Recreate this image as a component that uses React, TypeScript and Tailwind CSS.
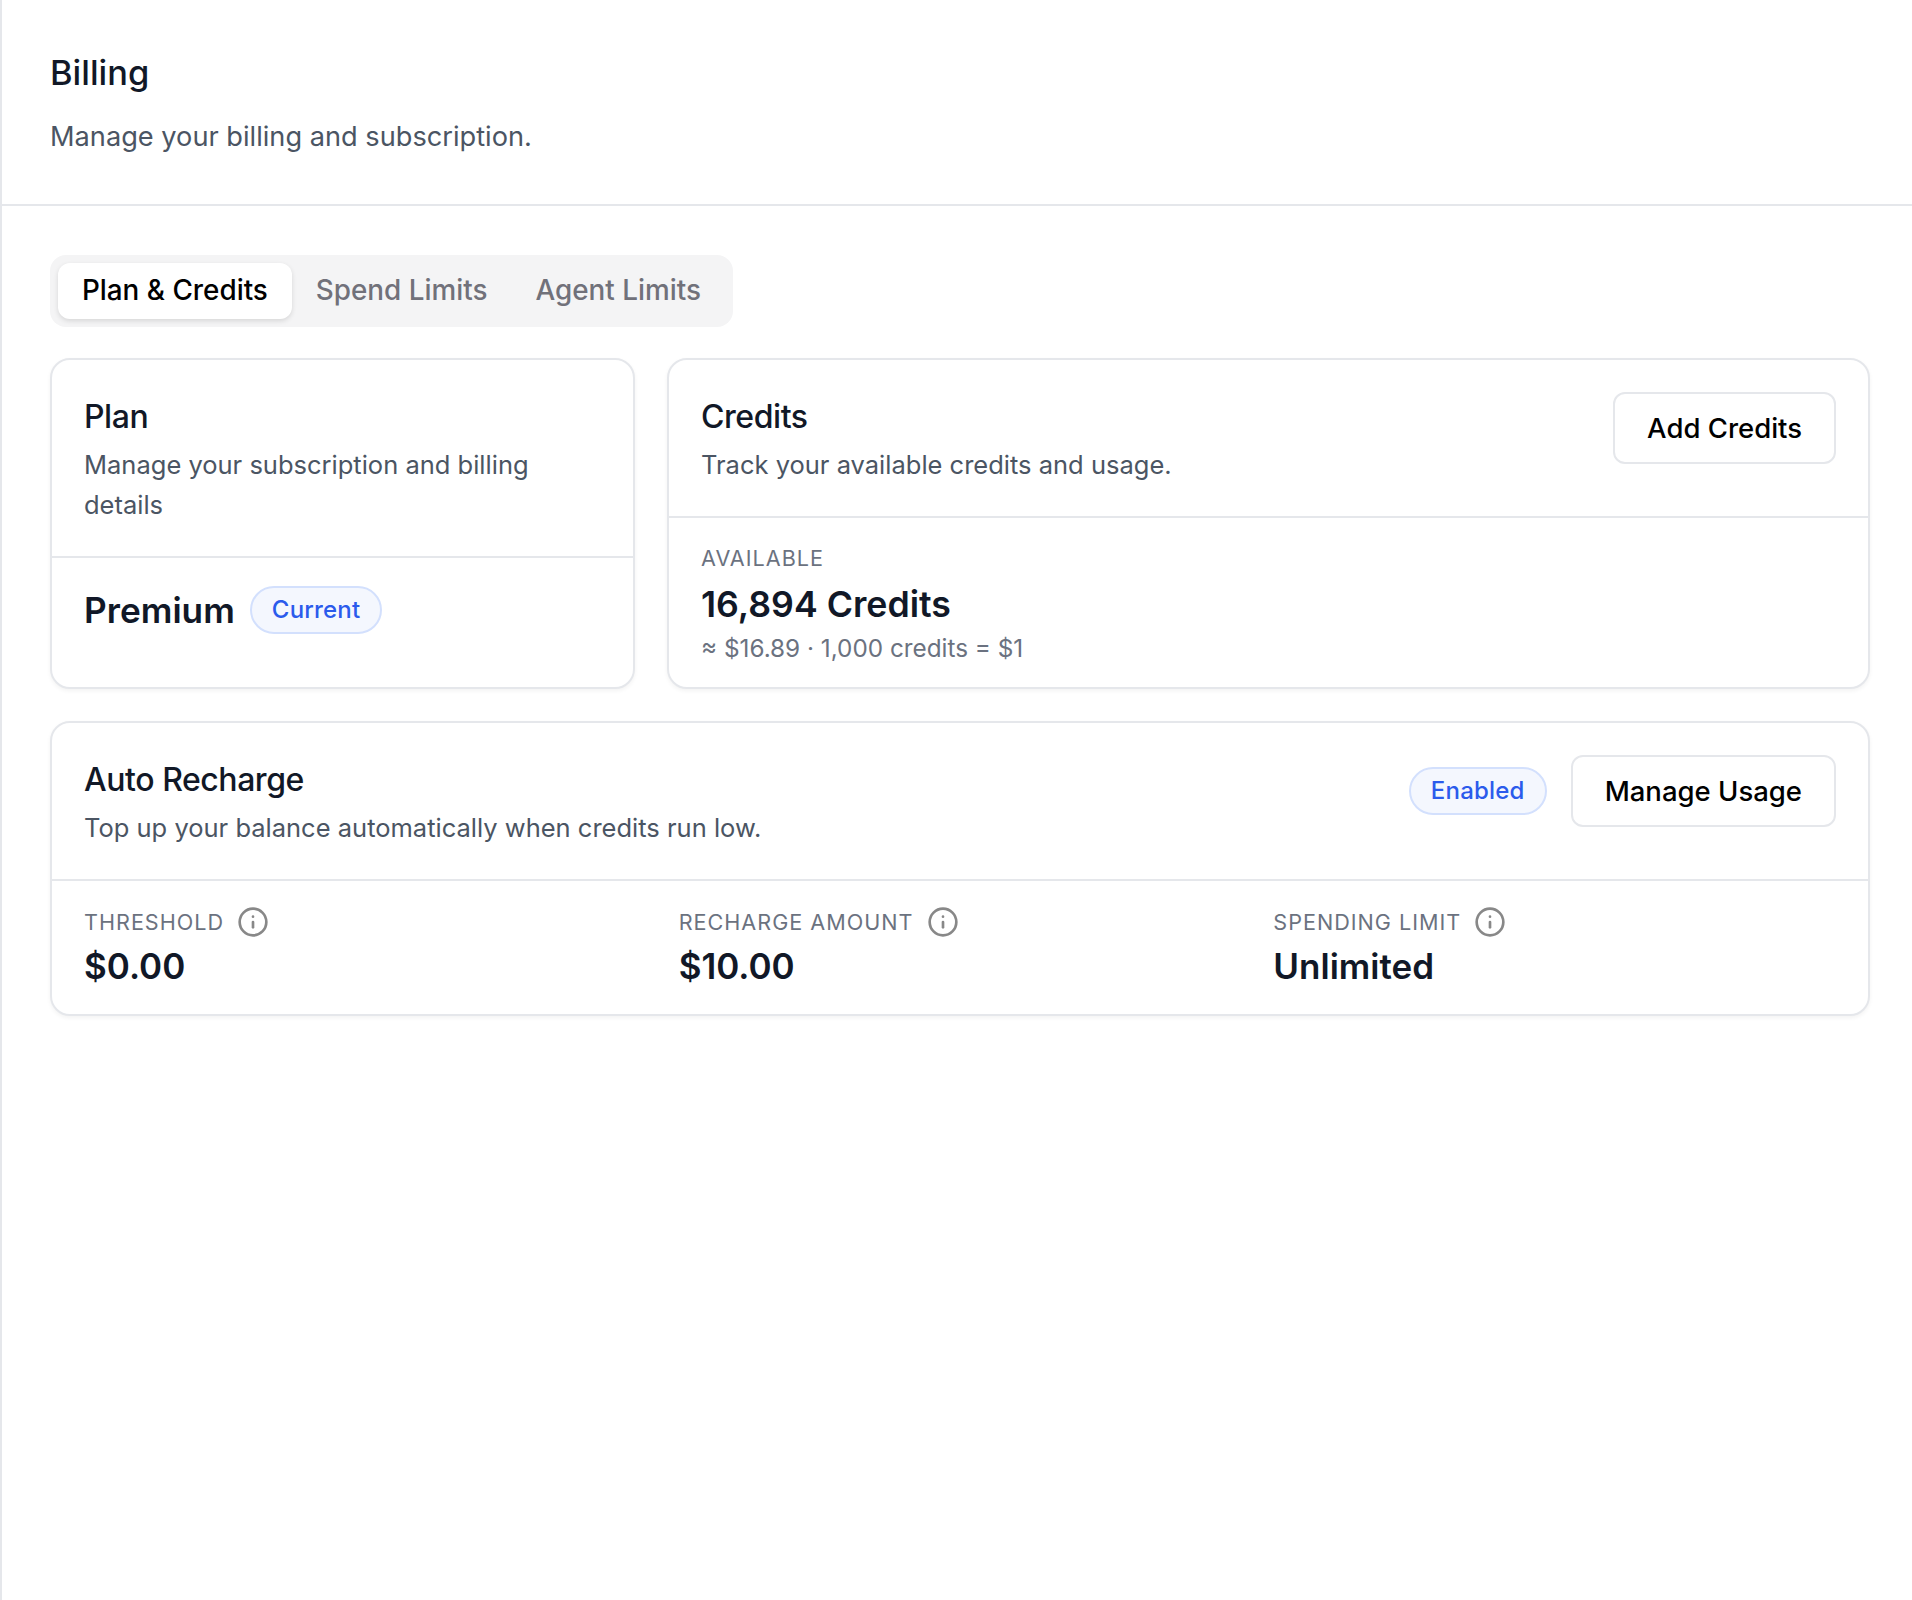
import { Info } from "lucide-react";

function Badge({ label }: { label: string }) {
  return (
    <span className="inline-flex h-[48px] items-center rounded-full border-2 border-[#d3e0fd] bg-[#f4f7fe] px-[20px] text-[24px] font-medium tracking-[0.2px] text-[#2b5bec]">
      {label}
    </span>
  );
}

function OutlineButton({ label }: { label: string }) {
  return (
    <button className="h-[72px] rounded-[12px] border-2 border-[#e5e7eb] bg-white px-[32px] pt-[2px] text-[27.5px] font-medium whitespace-nowrap text-black">
      {label}
    </button>
  );
}

function CardHead({ title, desc }: { title: string; desc: string }) {
  return (
    <div className="pt-[1px]">
      <h2 className="text-[32px] leading-[48px] font-medium tracking-[-0.45px] text-[#111827]">{title}</h2>
      <p className="mt-[4px] text-[25.5px] leading-[40px] text-[#4b5563]">{desc}</p>
    </div>
  );
}

function Stat({ label, value }: { label: string; value: string }) {
  return (
    <div>
      <div className="flex h-[32px] items-center gap-[13px] text-[21.6px] tracking-[1px] text-[#6b7280] uppercase">
        {label}
        <Info size={32} strokeWidth={2} className="text-[#888888]" />
      </div>
      <div className="mt-[6px] text-[35px] leading-[44px] font-semibold text-[#111827]">{value}</div>
    </div>
  );
}

export default function App() {
  return (
    <div className="min-h-[1600px] border-l-2 border-[#e5e7eb] bg-white font-['Inter',sans-serif]">
      <header className="border-b-2 border-[#e5e7eb] px-[48px] pt-[45px] pb-[47px]">
        <h1 className="text-[34.4px] leading-[56px] font-medium text-[#111827]">Billing</h1>
        <p className="mt-[16px] text-[27.2px] leading-[40px] text-[#4b5563]">Manage your billing and subscription.</p>
      </header>

      <main className="flex flex-col pt-[49px] pr-[42px] pl-[48px]">
        <div className="flex h-[72px] w-[683px] items-center rounded-[16px] bg-[#f4f4f5] p-[8px] text-[27.85px] font-medium whitespace-nowrap">
          <div className="flex h-[56px] w-[235px] items-center justify-center rounded-[12px] bg-white text-black shadow-[0_2px_5px_rgba(0,0,0,0.12)]">
            Plan &amp; Credits
          </div>
          <div className="flex h-[56px] items-center px-[24px] text-[#71717a]">Spend Limits</div>
          <div className="flex h-[56px] items-center px-[24px] text-[#71717a]">Agent Limits</div>
        </div>

        <div className="mt-[31px] grid grid-cols-[585px_1fr] gap-[32px]">
          <section className="flex h-[331px] flex-col rounded-[20px] border-2 border-[#e5e7eb] bg-white shadow-[0_2px_4px_rgba(0,0,0,0.05)]">
            <div className="border-b-2 border-[#e5e7eb] px-[32px] pt-[32px] pb-[31px]">
              <CardHead title="Plan" desc="Manage your subscription and billing details" />
            </div>
            <div className="flex items-center gap-[15px] px-[32px] pt-[24px]">
              <span className="text-[35.2px] leading-[56px] font-semibold text-[#111827]">Premium</span>
              <Badge label="Current" />
            </div>
          </section>

          <section className="flex h-[331px] flex-col rounded-[20px] border-2 border-[#e5e7eb] bg-white shadow-[0_2px_4px_rgba(0,0,0,0.05)]">
            <div className="flex items-start justify-between border-b-2 border-[#e5e7eb] px-[32px] pt-[32px] pb-[31px]">
              <CardHead title="Credits" desc="Track your available credits and usage." />
              <OutlineButton label="Add Credits" />
            </div>
            <div className="px-[32px] pt-[24px]">
              <div className="text-[21.6px] leading-[32px] tracking-[1px] text-[#6b7280] uppercase">Available</div>
              <div className="mt-[8px] text-[35.7px] leading-[44px] font-semibold text-[#111827]">16,894 Credits</div>
              <div className="mt-[6px] text-[24.3px] leading-[32px] text-[#6b7280]">≈ $16.89 · 1,000 credits = $1</div>
            </div>
          </section>
        </div>

        <section className="mt-[32px] rounded-[20px] border-2 border-[#e5e7eb] bg-white shadow-[0_2px_4px_rgba(0,0,0,0.05)]">
          <div className="flex items-start justify-between border-b-2 border-[#e5e7eb] px-[32px] pt-[32px] pb-[31px]">
            <CardHead title="Auto Recharge" desc="Top up your balance automatically when credits run low." />
            <div className="flex h-[72px] items-center gap-[24px]">
              <Badge label="Enabled" />
              <OutlineButton label="Manage Usage" />
            </div>
          </div>
          <div className="grid grid-cols-3 gap-[32px] px-[32px] pt-[25px] pb-[26px]">
            <Stat label="Threshold" value="$0.00" />
            <Stat label="Recharge Amount" value="$10.00" />
            <Stat label="Spending Limit" value="Unlimited" />
          </div>
        </section>
      </main>
    </div>
  );
}
